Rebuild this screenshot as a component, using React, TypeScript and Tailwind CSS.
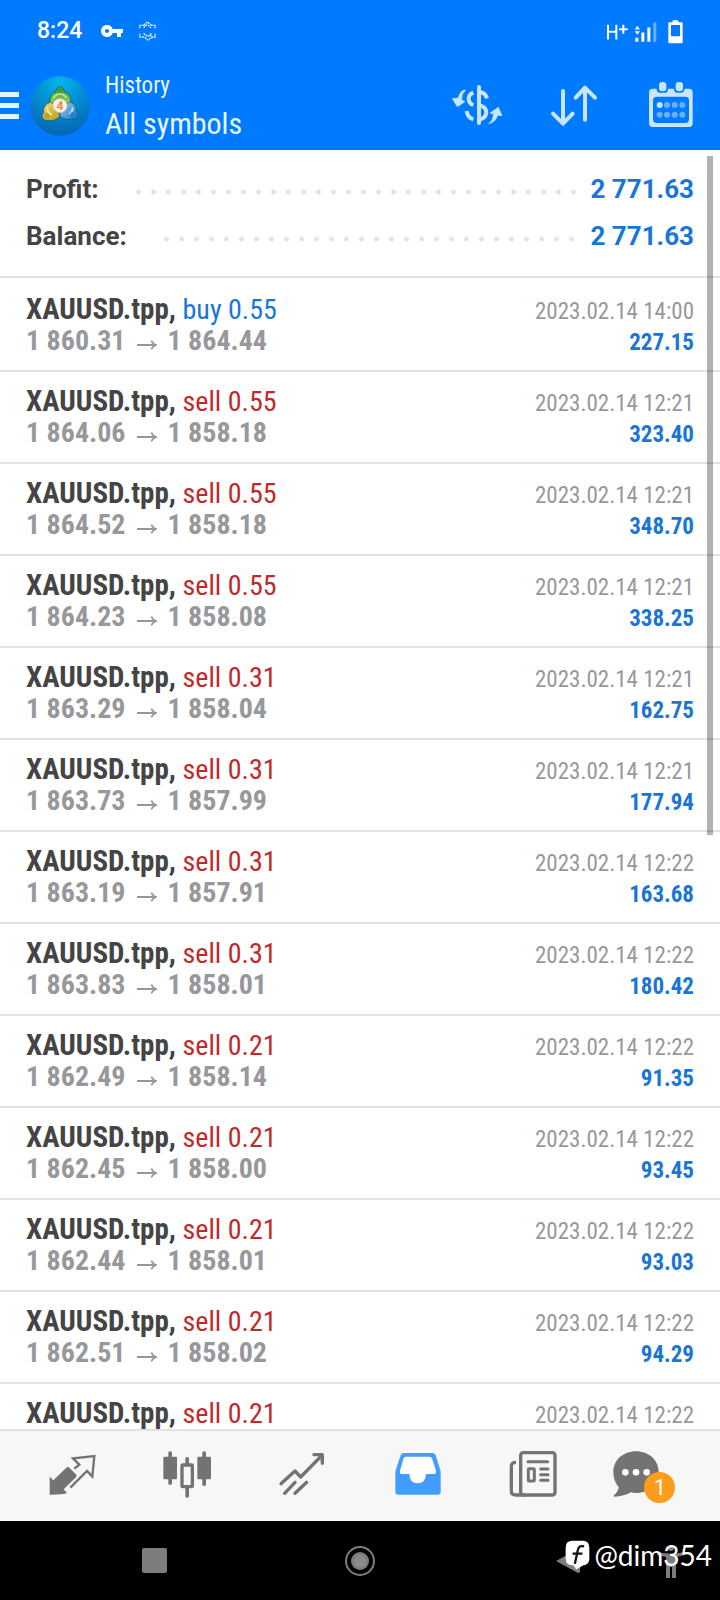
import React from 'react'
import { MdVpnKey } from 'react-icons/md'

interface Deal {
  side: 'buy' | 'sell'
  volume: string
  open: string
  close: string
  time: string
  profit: string
}

const deals: Deal[] = [
  { side: 'buy', volume: '0.55', open: '1 860.31', close: '1 864.44', time: '2023.02.14 14:00', profit: '227.15' },
  { side: 'sell', volume: '0.55', open: '1 864.06', close: '1 858.18', time: '2023.02.14 12:21', profit: '323.40' },
  { side: 'sell', volume: '0.55', open: '1 864.52', close: '1 858.18', time: '2023.02.14 12:21', profit: '348.70' },
  { side: 'sell', volume: '0.55', open: '1 864.23', close: '1 858.08', time: '2023.02.14 12:21', profit: '338.25' },
  { side: 'sell', volume: '0.31', open: '1 863.29', close: '1 858.04', time: '2023.02.14 12:21', profit: '162.75' },
  { side: 'sell', volume: '0.31', open: '1 863.73', close: '1 857.99', time: '2023.02.14 12:21', profit: '177.94' },
  { side: 'sell', volume: '0.31', open: '1 863.19', close: '1 857.91', time: '2023.02.14 12:22', profit: '163.68' },
  { side: 'sell', volume: '0.31', open: '1 863.83', close: '1 858.01', time: '2023.02.14 12:22', profit: '180.42' },
  { side: 'sell', volume: '0.21', open: '1 862.49', close: '1 858.14', time: '2023.02.14 12:22', profit: '91.35' },
  { side: 'sell', volume: '0.21', open: '1 862.45', close: '1 858.00', time: '2023.02.14 12:22', profit: '93.45' },
  { side: 'sell', volume: '0.21', open: '1 862.44', close: '1 858.01', time: '2023.02.14 12:22', profit: '93.03' },
  { side: 'sell', volume: '0.21', open: '1 862.51', close: '1 858.02', time: '2023.02.14 12:22', profit: '94.29' },
  { side: 'sell', volume: '0.21', open: '1 862.48', close: '1 858.02', time: '2023.02.14 12:22', profit: '93.66' },
]

function StatusBar() {
  return (
    <div className="flex h-[60px] shrink-0 items-center justify-between px-[37px] pt-[2px] text-white">
      <div className="flex items-center">
        <span className="font-[Roboto,sans-serif] text-[23px] font-medium leading-7">8:24</span>
        <MdVpnKey className="ml-[18px] size-6" />
        <svg viewBox="416 58 56 60" className="ml-[14px] h-5 w-[19px]" fill="none" stroke="#d9f1ff" strokeWidth="4">
          <path d="M421 80v-9h14M467 80v-9h-14M421 96v10h14M467 96v10h-14M433 70l11-9 11 9M433 79q4-10 11-8q7 1 10 8M433 95q3 8 11 6M455 95q-3 8-11 9M436 107l8 8 9-5M452 98l6 12" strokeDasharray="6 2" />
        </svg>
      </div>
      <div className="flex items-center">
        <svg viewBox="526 50 66 74" className="h-[25px] w-[22px]" stroke="#fff" fill="none">
          <path d="M532 67v44M557 67v44M532 88h25" strokeWidth="6" />
          <path d="M565 80h26M578 67v27" strokeWidth="6" />
        </svg>
        <svg viewBox="611 50 69 74" className="ml-[6px] h-[25px] w-[23px]" fill="#fff">
          <path d="M621 70l8 11h-16zM621 97l8-11h-16z" />
          <path d="M615 106h9v12h-9zM633 90h9v28h-9zM651 75h9v43h-9z" />
          <path d="M669 60h9v58h-9z" opacity=".4" />
        </svg>
        <svg viewBox="714 50 45 75" className="ml-[11px] h-[25px] w-[15px]">
          <path d="M728 54h17v6h10q3 0 3 3v57q0 3-3 3h-37q-3 0-3-3v-57q0-3 3-3h10zM723 68v34h27V68z" fill="#fff" fillRule="evenodd" />
        </svg>
      </div>
    </div>
  )
}

function AppLogo() {
  return (
    <svg viewBox="90 225 180 180" className="size-[60px]">
      <defs>
        <radialGradient id="disc" cx=".5" cy=".1" r=".95">
          <stop offset="0" stopColor="#05b4ea" />
          <stop offset=".5" stopColor="#0489cf" />
          <stop offset="1" stopColor="#0560b0" />
        </radialGradient>
        <linearGradient id="green" x1="0" y1="0" x2="0" y2="1">
          <stop offset="0" stopColor="#3c9a3a" />
          <stop offset="1" stopColor="#a5d65c" />
        </linearGradient>
        <linearGradient id="yellow" x1="0" y1="0" x2="1" y2="1">
          <stop offset="0" stopColor="#f2e07a" />
          <stop offset="1" stopColor="#b39a1c" />
        </linearGradient>
        <linearGradient id="blue" x1="0" y1="0" x2="1" y2="1">
          <stop offset="0" stopColor="#9ad4f6" />
          <stop offset="1" stopColor="#1874c4" />
        </linearGradient>
      </defs>
      <circle cx="180" cy="315" r="89" fill="url(#disc)" />
      <g stroke="#0b5468" strokeWidth="2">
        <path d="M150 303q-2-24 17-31q3-15 13-15t14 15q20 8 18 33l-11 8h-42z" fill="url(#green)" />
        <path d="M152 303q-24 8-22 33q-6 8-2 16q6 8 16 6q22 4 36-12l-8-28z" fill="url(#yellow)" />
        <path d="M210 303q21 7 19 29q8 8 3 17q-5 7-14 5q-23 6-38-10l-2-26z" fill="url(#blue)" />
      </g>
      <path d="M160 291q8-12 20-12t20 12" fill="none" stroke="#c9ec8b" strokeWidth="5" />
      <path d="M142 320q0 18 14 20" fill="none" stroke="#fbf0a0" strokeWidth="5" />
      <path d="M218 320q-1 14-10 20" fill="none" stroke="#c9ebff" strokeWidth="5" />
      <circle cx="180" cy="267" r="9" fill="#3f9a41" />
      <circle cx="140" cy="344" r="9" fill="#bda326" />
      <circle cx="219" cy="342" r="9" fill="#2c7fcb" />
      <circle cx="180" cy="314" r="21" fill="#f6f3ee" stroke="#c9c2b4" strokeWidth="2" />
      <text x="180" y="327" textAnchor="middle" fontSize="36" fontWeight="700" fontFamily="Roboto, sans-serif" fill="#f0883e">4</text>
    </svg>
  )
}

function AppBar() {
  return (
    <div className="flex h-[90px] shrink-0 items-center border-b border-[#1a6fcb] pr-6 pt-[2px] text-[#e6f7ff]">
      <button type="button" aria-label="Open menu" className="flex h-[60px] w-[19px] flex-col items-stretch justify-center gap-[6px]">
        <span className="h-[5px] bg-[#e0f6ff]" />
        <span className="h-[5px] bg-[#e0f6ff]" />
        <span className="h-[5px] bg-[#e0f6ff]" />
      </button>
      <div className="ml-[11px]">
        <AppLogo />
      </div>
      <div className="ml-[15px] flex-1 font-['Roboto_Condensed','Liberation_Sans_Narrow',Roboto,sans-serif]">
        <p className="text-[23px] leading-9">History</p>
        <h1 className="text-[30px] leading-10">All symbols</h1>
      </div>
      <div className="flex gap-[47px] text-[#c8e5ff]">
        <button type="button" aria-label="Symbols">
          <svg viewBox="66 240 150 150" className="size-[50px]" fill="none" stroke="currentColor">
            <path d="M147 258v108" strokeWidth="12" strokeLinecap="round" />
            <path d="M130 275q-14 5-14 18t14 20M110 330q3 20 20 25M151 274q14 1 20 18M151 314q18 5 18 20t-18 21" strokeWidth="12" />
            <path d="M107 267q-17 0-22 24l-18 2 15 24 23-15-10-5q-2-17 12-30zM176 368q14-9 14-30l-10-2 25-17 11 25-13-1q-6 21-27 25z" fill="currentColor" strokeWidth="2" />
          </svg>
        </button>
        <button type="button" aria-label="Sort">
          <svg viewBox="357 240 150 150" className="size-[50px]" fill="none" stroke="currentColor" strokeWidth="12" strokeLinecap="round" strokeLinejoin="round">
            <path d="M399 270v98M369 338l30 30 29-30M465 356v-96M437 290l28-30 30 30" />
          </svg>
        </button>
        <button type="button" aria-label="Period">
          <svg viewBox="648 240 150 150" className="size-[50px]">
            <path d="M668 263h12q0 12 10 12h16q8 0 8-12h18q0 12 10 12h12q8 0 10-12h13q11 0 11 11v93q0 11-11 11H668q-11 0-11-11v-93q0-11 11-11zM680 287q-11 0-11 11v57q0 11 11 11h86q11 0 11-11v-57q0-11-11-11z" fill="currentColor" fillRule="evenodd" />
            <rect x="687" y="243" width="22" height="28" rx="9" fill="currentColor" />
            <rect x="737" y="243" width="22" height="28" rx="9" fill="currentColor" />
            <circle cx="689" cy="312" r="9" fill="currentColor" />
            <g fill="#69b1ff">
              <circle cx="711" cy="312" r="9" />
              <circle cx="734" cy="312" r="9" />
              <circle cx="757" cy="312" r="9" />
              <circle cx="689" cy="341" r="9" />
              <circle cx="711" cy="341" r="9" />
              <circle cx="734" cy="341" r="9" />
              <circle cx="757" cy="341" r="9" />
            </g>
          </svg>
        </button>
      </div>
    </div>
  )
}

function SummaryRow({ label, value }: { label: string; value: string }) {
  return (
    <div className="flex h-[47px] items-center">
      <dt className="text-[#444]">{label}</dt>
      <span className="ml-8 mr-3 mt-1 h-[6px] flex-1 bg-[radial-gradient(circle,#e4e4e4_2px,transparent_3px)] bg-[length:15px_6px] bg-repeat-x" />
      <dd className="text-[#1976d8]">{value}</dd>
    </div>
  )
}

function DealRow({ deal }: { deal: Deal }) {
  return (
    <li className="border-b-2 border-[#e2e2e2] px-[26px] py-[13px]">
      <div className="flex h-8 items-baseline justify-between leading-8">
        <p className="text-[29px]">
          <span className="font-bold text-[#444]">XAUUSD.tpp, </span>
          <span className={deal.side === 'buy' ? 'text-[28px] text-[#1976d8]' : 'text-[28px] text-[#c02a2a]'}>
            {deal.side} {deal.volume}
          </span>
        </p>
        <time className="text-[23px] text-[#97989b]">{deal.time}</time>
      </div>
      <div className="flex h-8 items-baseline justify-between font-bold leading-8">
        <p className="flex items-baseline text-[28px] text-[#97989b]">
          {deal.open}
          <svg viewBox="0 0 60 30" className="mx-[11px] h-[10px] w-5" fill="none" stroke="currentColor" strokeWidth="6">
            <path d="M0 15h54" />
            <path d="M43 2q4 10 15 13q-11 3-15 13" strokeWidth="5" />
          </svg>
          {deal.close}
        </p>
        <span className="text-[23px] text-[#1976d8]">{deal.profit}</span>
      </div>
    </li>
  )
}

function TabBar() {
  return (
    <nav className="grid h-[92px] shrink-0 grid-cols-6 items-center justify-items-center border-t-2 border-[#e2e2e2] bg-[#f7f7f7] px-[14px] text-[#737373]">
      <button type="button" aria-label="Quotes">
        <svg viewBox="142 93 150 150" className="size-[50px]">
          <path d="M150 170l11 11 39-38q5-4 9 0l20 20q4 5 0 9l-37 36 10 11-9 3q-22 2-43 2z" fill="currentColor" />
          <path d="M224 146l15-12-19-19 64-7-6 62-16-17-50 50" fill="none" stroke="currentColor" strokeWidth="7" />
        </svg>
      </button>
      <button type="button" aria-label="Charts">
        <svg viewBox="487 93 150 150" className="size-[50px]" fill="currentColor">
          <rect x="506" y="94" width="11" height="101" rx="5" />
          <rect x="491" y="110" width="41" height="68" rx="4" />
          <rect x="608" y="94" width="11" height="104" rx="5" />
          <rect x="593" y="110" width="41" height="68" rx="4" />
          <rect x="557" y="111" width="11" height="28" rx="5" />
          <rect x="557" y="196" width="11" height="37" rx="5" />
          <rect x="547" y="135" width="31" height="65" rx="2" fill="none" stroke="currentColor" strokeWidth="10" />
        </svg>
      </button>
      <button type="button" aria-label="Trade">
        <svg viewBox="832 93 150 150" className="size-[50px]" fill="none" stroke="currentColor" strokeWidth="10" strokeLinecap="round" strokeLinejoin="round">
          <path d="M844 191l42-38 17 18 65-66M943 104h25v26M855 220l31-33M886 220l35-33" />
        </svg>
      </button>
      <button type="button" aria-label="History" aria-current="page" className="text-[#439dff]">
        <svg viewBox="98 93 150 150" className="size-[50px]">
          <path d="M131 99h84q8 0 11 7l14 45q1 4 1 8v56q0 9-9 9H114q-9 0-9-9v-56q0-4 1-8l15-45q3-7 10-7z" fill="currentColor" />
          <path d="M137 110q-5 0-7 5l-11 37q-1 10 6 10h22q1 28 25 28t25-28h22q9 0 8-10l-12-37q-2-5-7-5z" fill="#fff" />
        </svg>
      </button>
      <button type="button" aria-label="News">
        <svg viewBox="444 93 150 150" className="size-[50px]" fill="none" stroke="currentColor">
          <rect x="482" y="98" width="103" height="127" rx="8" strokeWidth="10" />
          <path d="M468 127q-14 0-14 12v75q0 11 14 11h26" strokeWidth="10" />
          <path d="M504 125h59M542 147h22M542 164h22M542 181h22" strokeWidth="9" strokeLinecap="round" />
          <rect x="505" y="146" width="18" height="37" rx="2" strokeWidth="9" />
        </svg>
      </button>
      <button type="button" aria-label="Messages" className="relative">
        <svg viewBox="759 63 210 210" className="size-[70px]">
          <path d="M828 94c38 0 68 26 68 62s-28 63-68 63q-8 0-15-2-20 12-50 13-4-1-1-4 14-13 14-25-16-17-16-45c0-36 30-62 68-62z" fill="currentColor" />
          <circle cx="796" cy="157" r="10" fill="#fff" />
          <circle cx="828" cy="157" r="10" fill="#fff" />
          <circle cx="860" cy="157" r="10" fill="#fff" />
        </svg>
        <span className="absolute bottom-2 right-2 flex size-[31px] items-center justify-center rounded-full bg-[#ff9c1b] font-[Roboto,sans-serif] text-[22px] text-white">1</span>
      </button>
    </nav>
  )
}

function SystemNav() {
  return (
    <div className="relative h-[79px] shrink-0 bg-black text-[#7d7d7d]">
      <div className="grid h-full grid-cols-7 items-center justify-items-center">
        <button type="button" aria-label="Recent apps" className="col-start-2 size-[25px] rounded-[2px] bg-current" />
        <button type="button" aria-label="Home" className="col-start-4">
          <svg viewBox="0 0 30 30" className="size-[30px]">
            <circle cx="15" cy="15" r="14" fill="none" stroke="currentColor" strokeWidth="2" />
            <circle cx="15" cy="15" r="9" fill="currentColor" />
            <circle cx="15" cy="15" r="6" fill="#8b8b8b" />
          </svg>
        </button>
        <button type="button" aria-label="Back" className="col-start-6 ml-1">
          <svg viewBox="0 0 24 26" className="h-[26px] w-6" fill="currentColor">
            <path d="M0 13L22 1q2 0 2 2v20q0 2-2 2z" />
          </svg>
        </button>
        <button type="button" aria-label="Accessibility" className="col-start-7 ml-1">
          <svg viewBox="0 0 28 34" className="h-[34px] w-7" fill="currentColor">
            <circle cx="14" cy="4" r="3" />
            <path d="M0 8q14 3 28 0v3l-9 2v21h-4v-11h-2v11H9V13l-9-2z" />
          </svg>
        </button>
      </div>
      <div className="absolute right-2 top-4 flex items-center gap-1 text-white">
        <svg viewBox="622 370 76 90" className="h-[30px] w-[25px]">
          <path d="M644 372h32q20 0 20 20v34q0 20-18 20l-22 13-8-12q-24 0-24-21v-34q0-20 20-20z" fill="#fff" />
          <path d="M680 389q-16-5-19 11l-9 42M645 411h30" fill="none" stroke="#111" strokeWidth="7" />
        </svg>
        <span className="font-[Lato,sans-serif] text-[28px] leading-9">@dim354</span>
      </div>
    </div>
  )
}

export default function App() {
  return (
    <div className="flex h-screen flex-col overflow-hidden bg-white">
      <header className="bg-[#007aff]">
        <StatusBar />
        <AppBar />
      </header>
      <main className="relative min-h-0 flex-1 overflow-hidden">
        <dl className="border-b-2 border-[#e2e2e2] px-[26px] py-4 font-[Roboto,sans-serif] text-[26px] font-bold">
          <SummaryRow label="Profit:" value="2 771.63" />
          <SummaryRow label="Balance:" value="2 771.63" />
        </dl>
        <ul className="pt-0.5 font-['Roboto_Condensed','Liberation_Sans_Narrow',Roboto,sans-serif]">
          {deals.map((deal, i) => (
            <DealRow key={i} deal={deal} />
          ))}
        </ul>
        <div className="absolute right-[7px] top-[6px] h-[679px] w-[6px] bg-black/30" />
      </main>
      <TabBar />
      <SystemNav />
    </div>
  )
}
